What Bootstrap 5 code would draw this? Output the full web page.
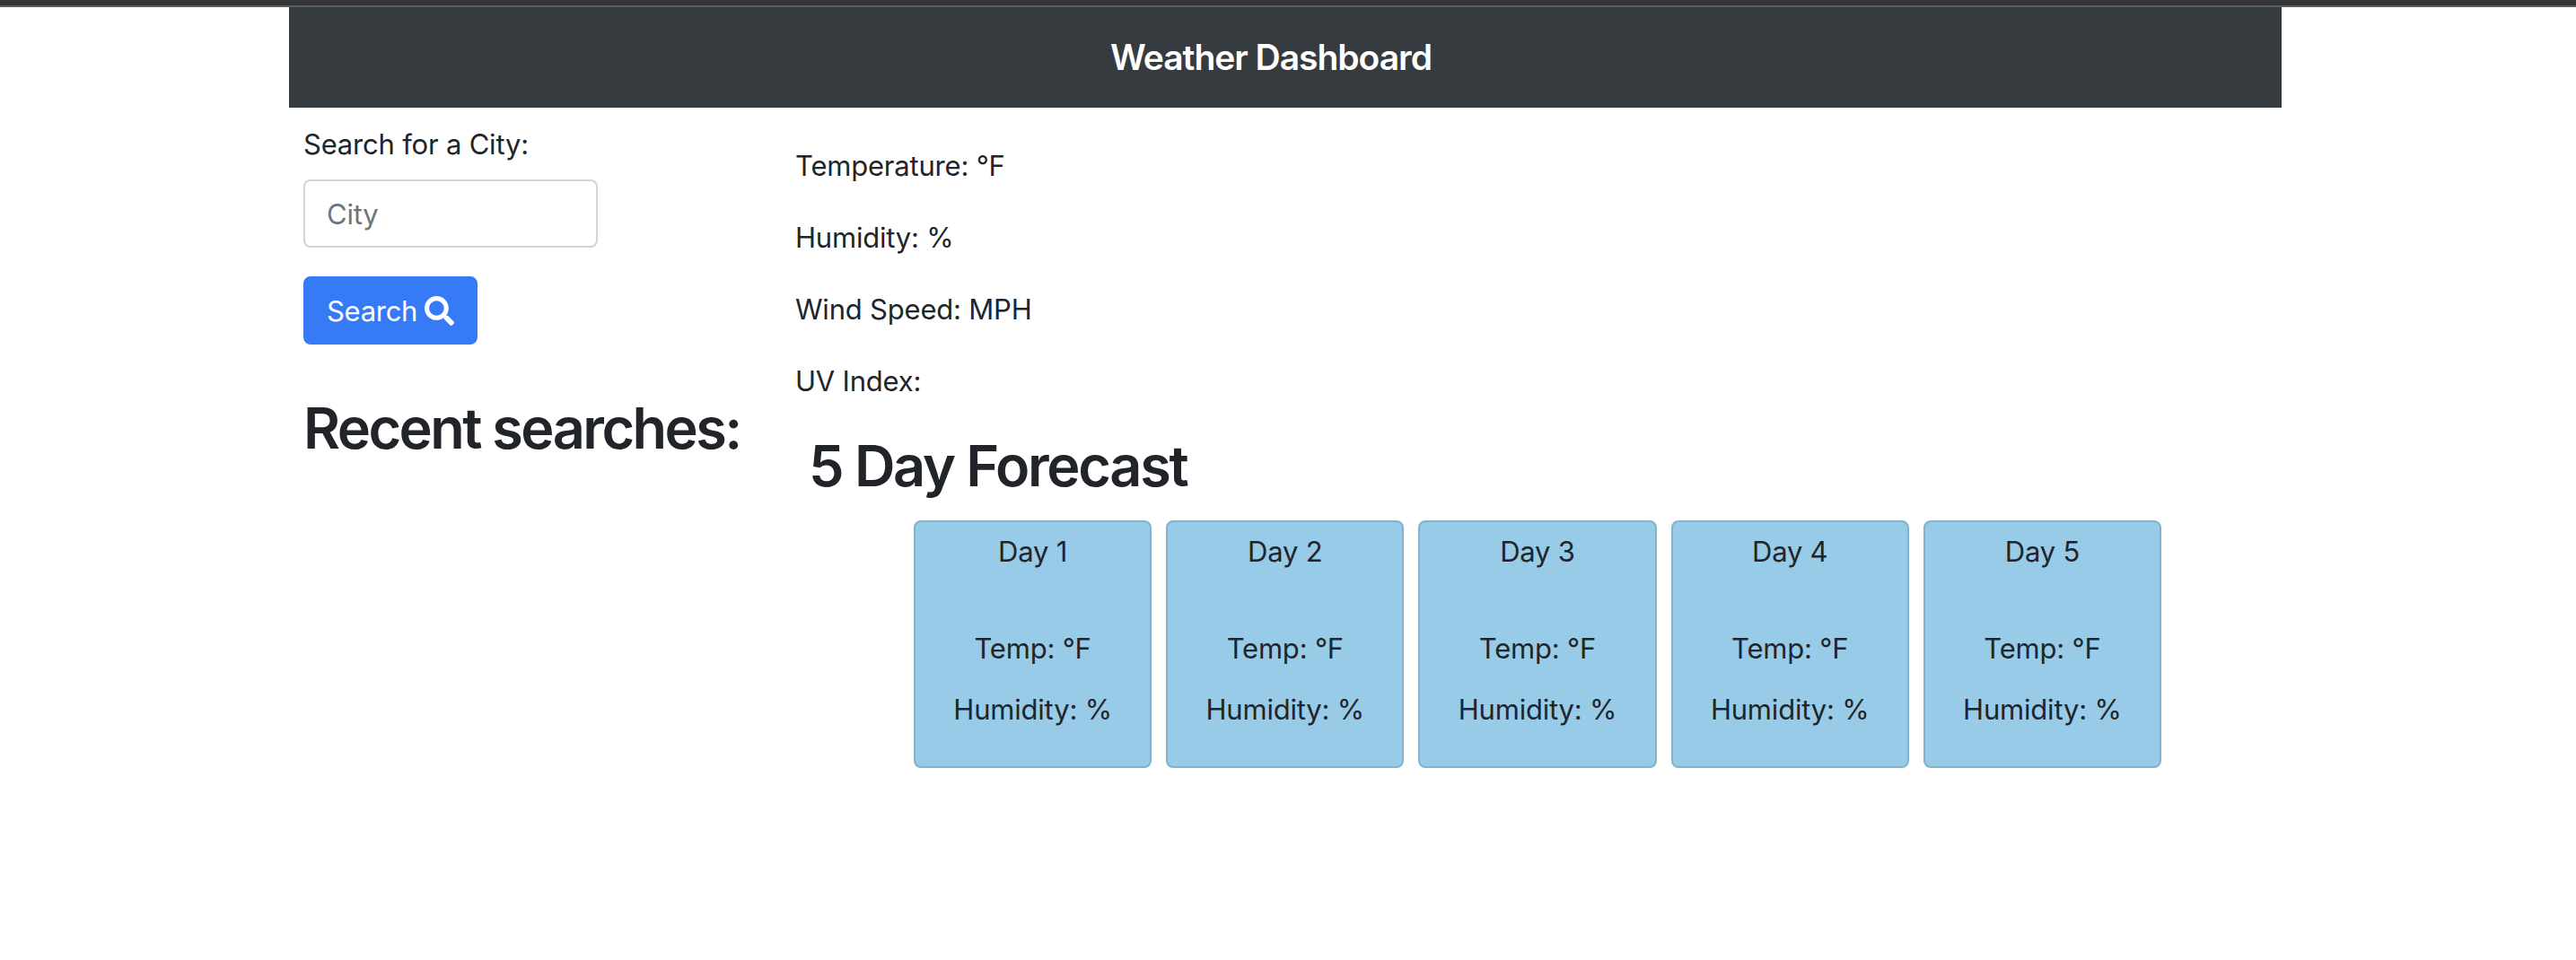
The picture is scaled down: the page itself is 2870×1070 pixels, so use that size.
<!DOCTYPE html>
<html lang="en">
<head>
<meta charset="utf-8">
<meta name="viewport" content="width=device-width, initial-scale=1">
<title>Weather Dashboard</title>
<link href="https://cdn.jsdelivr.net/npm/bootstrap@5.3.0/dist/css/bootstrap.min.css" rel="stylesheet">
<style>
  html { font-size: 32px; }
  body { font-family: Inter, "Liberation Sans", sans-serif; font-size: 31px; line-height: 48px; letter-spacing: -.2px; color: #212529; overflow: hidden; }
  .top-strip { height: 8px; background: #36353a; border-bottom: 2px solid #5f5c61; }
  .page-wrap { width: 2220px; margin-left: 322px; }
  .title-bar { height: 112px; background: #353b3f; }
  .title-bar .navbar-brand { font-size: 39px; font-weight: 600; line-height: 60px; letter-spacing: -1.03px; color: #fff; margin-right: 32px; }
  .search-col { width: 548px; padding: 17px 0 0 16px; }
  .search-col .form-control { width: 328px; height: 76px; padding: 12px 24px; margin-top: 15px; border: 2px solid #ced4da; border-radius: 8px; font-size: 31px; line-height: 48px; letter-spacing: -.2px; }
  .search-col .form-control::placeholder { color: #6c757d; opacity: 1; }
  .btn-search { width: 194px; height: 76px; padding: 13px 24px 11px; border: 2px solid #367af6; border-radius: 8px; background: #367af6; color: #fff; font-size: 31px; line-height: 48px; letter-spacing: -.3px; }
  .btn-search svg { width: 33px; height: 33px; margin-top: -2px; }
  .section-title { font-size: 63px; font-weight: 600; line-height: 76px; letter-spacing: -2.55px; margin: 0; white-space: nowrap; }
  .recent-title { margin-top: 55px; }
  .forecast-title { letter-spacing: -2.3px; padding-left: 15px; }
  .result-col { padding: 41px 0 0 16px; }
  .forecast-row { gap: 16px; padding: 0 134px 0 132px; margin-top: 23px; }
  .day-card { height: 276px; background: #97cbe8; border: 2px solid #84b2cb; border-radius: 8px; padding-top: 9px; color: #212529; }
  .day-card p { margin-bottom: 20px; }
  .day-card .day-name { margin-bottom: 60px; }
</style>
<script src="https://cdn.jsdelivr.net/npm/bootstrap@5.3.0/dist/js/bootstrap.bundle.min.js"></script>
</head>
<body>
<div class="top-strip"></div>
<div class="page-wrap">
  <nav class="navbar title-bar d-flex justify-content-center p-0">
    <span class="navbar-brand p-0">Weather Dashboard</span>
  </nav>
  <div class="d-flex">
    <aside class="search-col flex-shrink-0">
      <label for="city" class="d-block">Search for a City:</label>
      <input id="city" type="text" class="form-control" placeholder="City">
      <button type="button" class="btn btn-search mt-3 d-flex align-items-center justify-content-between">
        <span>Search</span>
        <svg viewBox="0 0 512 512" fill="currentColor" aria-hidden="true"><path d="M505 442.700L405.300 343c-4.500-4.500-10.600-7-17-7H372c27.600-35.300 44-79.700 44-128C416 93.100 322.900 0 208 0S0 93.100 0 208s93.100 208 208 208c48.300 0 92.700-16.400 128-44v16.300c0 6.400 2.500 12.500 7 17l99.700 99.700c9.400 9.400 24.600 9.400 33.900 0l28.300-28.300c9.400-9.400 9.400-24.600.1-34zM208 336c-70.700 0-128-57.200-128-128 0-70.700 57.200-128 128-128 70.700 0 128 57.200 128 128 0 70.700-57.200 128-128 128z"/></svg>
      </button>
      <h2 class="section-title recent-title">Recent searches:</h2>
    </aside>
    <main class="result-col flex-grow-1">
      <p>Temperature: °F</p>
      <p>Humidity: %</p>
      <p>Wind Speed: MPH</p>
      <p>UV Index:</p>
      <h2 class="section-title forecast-title">5 Day Forecast</h2>
      <div class="forecast-row d-flex text-center">
        <div class="card day-card flex-fill w-100"><p class="day-name">Day 1</p><p>Temp: °F</p><p>Humidity: %</p></div>
        <div class="card day-card flex-fill w-100"><p class="day-name">Day 2</p><p>Temp: °F</p><p>Humidity: %</p></div>
        <div class="card day-card flex-fill w-100"><p class="day-name">Day 3</p><p>Temp: °F</p><p>Humidity: %</p></div>
        <div class="card day-card flex-fill w-100"><p class="day-name">Day 4</p><p>Temp: °F</p><p>Humidity: %</p></div>
        <div class="card day-card flex-fill w-100"><p class="day-name">Day 5</p><p>Temp: °F</p><p>Humidity: %</p></div>
      </div>
    </main>
  </div>
</div>
</body>
</html>
